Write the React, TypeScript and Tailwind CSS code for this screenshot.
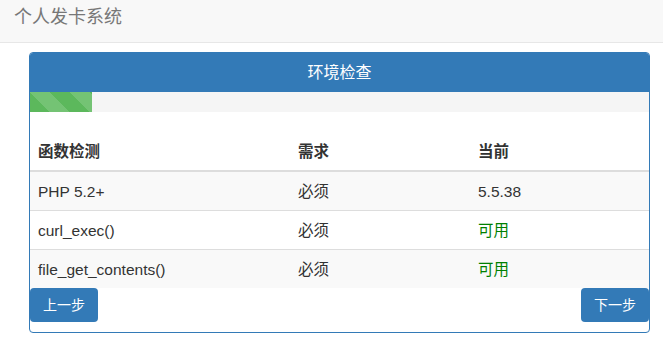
import React from 'react';

type Row = { name: string; need: string; current: string; ok?: boolean };

const rows: Row[] = [
  { name: 'PHP 5.2+', need: '必须', current: '5.5.38' },
  { name: 'curl_exec()', need: '必须', current: '可用', ok: true },
  { name: 'file_get_contents()', need: '必须', current: '可用', ok: true },
];

const font = "font-['Liberation_Sans','Noto_Sans_CJK_SC',sans-serif]";

export default function App() {
  return (
    <div className={`${font} min-h-[342px] w-[663px] bg-white text-[14px] text-[#333]`}>
      {/* navbar */}
      <div className="flex h-[43px] items-center border-b border-[#e7e7e7] bg-[#f8f8f8] px-[14px]">
        <span className="pb-[8px] text-[18px] leading-[20px] text-[#777]">个人发卡系统</span>
      </div>

      {/* panel */}
      <div className="ml-[29px] mt-[9px] w-[621px] rounded-[4px] border border-[#337ab7] bg-white">
        <div className="flex h-[39px] items-center justify-center rounded-t-[3px] bg-[#337ab7] text-[16px] text-white">
          环境检查
        </div>

        <div className="mb-[20px] h-[20px] bg-[#f5f5f5]">
          <div className="h-full w-[62px] bg-[#5cb85c] bg-[linear-gradient(45deg,rgba(255,255,255,.15)_25%,transparent_25%,transparent_50%,rgba(255,255,255,.15)_50%,rgba(255,255,255,.15)_75%,transparent_75%,transparent)] bg-[length:40px_40px]" />
        </div>

        <table className="w-full border-collapse text-[15.5px]">
          <thead>
            <tr className="h-[39px] border-b-2 border-[#ddd] text-left">
              <th className="w-[260px] px-[8px] pt-[2px] font-bold">函数检测</th>
              <th className="w-[180px] px-[8px] pt-[2px] font-bold">需求</th>
              <th className="px-[8px] pt-[2px] font-bold">当前</th>
            </tr>
          </thead>
          <tbody>
            {rows.map((r, i) => (
              <tr
                key={r.name}
                className={`h-[39px] ${i > 0 ? 'border-t border-[#ddd]' : ''} ${i % 2 === 0 ? 'bg-[#f9f9f9]' : 'bg-white'}`}
              >
                <td className="px-[8px] pt-[2px]">{r.name}</td>
                <td className="px-[8px] pt-[2px]">{r.need}</td>
                <td className={`px-[8px] pt-[2px] ${r.ok ? 'text-[#008000]' : ''}`}>{r.current}</td>
              </tr>
            ))}
          </tbody>
        </table>

        <div className="flex justify-between pb-[10px]">
          <button className="h-[34px] w-[68px] rounded-[4px] bg-[#337ab7] text-[14px] text-white">上一步</button>
          <button className="h-[34px] w-[68px] rounded-[4px] bg-[#337ab7] text-[14px] text-white">下一步</button>
        </div>
      </div>
    </div>
  );
}
